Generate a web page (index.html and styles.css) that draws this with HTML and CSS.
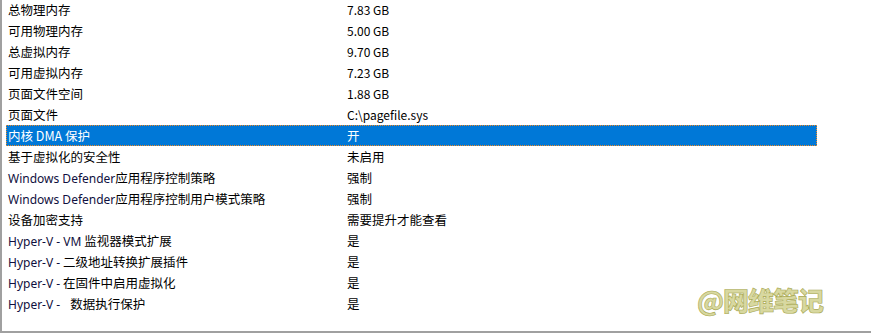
FILE: index.html
```html
<!DOCTYPE html>
<html lang="zh-CN">
<head>
<meta charset="utf-8">
<title>系统信息</title>
<link rel="stylesheet" href="styles.css">
</head>
<body>
<div class="pane">
  <div class="list">
    <div class="row"><span>总物理内存</span><span class="num">7.83 GB</span></div>
    <div class="row"><span>可用物理内存</span><span class="num">5.00 GB</span></div>
    <div class="row"><span>总虚拟内存</span><span class="num">9.70 GB</span></div>
    <div class="row"><span>可用虚拟内存</span><span class="num">7.23 GB</span></div>
    <div class="row"><span>页面文件空间</span><span class="num">1.88 GB</span></div>
    <div class="row"><span>页面文件</span><span class="num">C:\pagefile.sys</span></div>
    <div class="row selected"><span>内核 DMA 保护</span><span>开</span></div>
    <div class="row"><span>基于虚拟化的安全性</span><span>未启用</span></div>
    <div class="row"><span><span class="lat">Windows Defender</span>应用程序控制策略</span><span>强制</span></div>
    <div class="row"><span><span class="lat">Windows Defender</span>应用程序控制用户模式策略</span><span>强制</span></div>
    <div class="row"><span>设备加密支持</span><span>需要提升才能查看</span></div>
    <div class="row"><span><span class="lat">Hyper-V - VM</span> 监视器模式扩展</span><span>是</span></div>
    <div class="row"><span><span class="lat">Hyper-V -</span> 二级地址转换扩展插件</span><span>是</span></div>
    <div class="row"><span><span class="lat">Hyper-V -</span> 在固件中启用虚拟化</span><span>是</span></div>
    <div class="row"><span><span class="lat">Hyper-V -</span><span class="gap"></span>数据执行保护</span><span>是</span></div>
  </div>
  <div class="watermark">@网维笔记</div>
</div>
</body>
</html>
```
FILE: styles.css
```css
html, body {
  margin: 0;
  padding: 0;
  background: #ffffff;
}
body {
  width: 871px;
  height: 335px;
  overflow: hidden;
  font-family: "Noto Sans CJK SC", "Noto Sans", sans-serif;
  font-size: 12.5px;
  color: #000000;
}
.pane {
  position: relative;
  box-sizing: border-box;
  width: 871px;
  height: 333px;
  border-left: 2px solid #a0a0a0;
  border-bottom: 2px solid #a0a0a0;
  overflow: hidden;
}
.list {
  margin-top: -1px;
  padding-left: 4px;
}
.row {
  display: grid;
  grid-template-columns: 339px 1fr;
  box-sizing: border-box;
  width: 811px;
  height: 21px;
  line-height: 21px;
  padding-left: 2px;
  white-space: nowrap;
}
.lat {
  font-family: "Noto Sans", "Noto Sans CJK SC", sans-serif;
  font-size: 12px;
  color: #101040;
}
.num {
  font-size: 12px;
}
.gap {
  display: inline-block;
  width: 10px;
}
.selected {
  background: #0078d7;
  color: #ffffff;
  outline: 1px dotted #f08a24;
  outline-offset: -1px;
}
.watermark {
  position: absolute;
  left: 695px;
  top: 283px;
  font-family: "Noto Sans CJK SC", sans-serif;
  font-weight: 900;
  font-size: 26px;
  line-height: 34px;
  color: #d8d8a0;
  -webkit-text-stroke: 0.6px #a8a850;
  letter-spacing: -1px;
}
```
